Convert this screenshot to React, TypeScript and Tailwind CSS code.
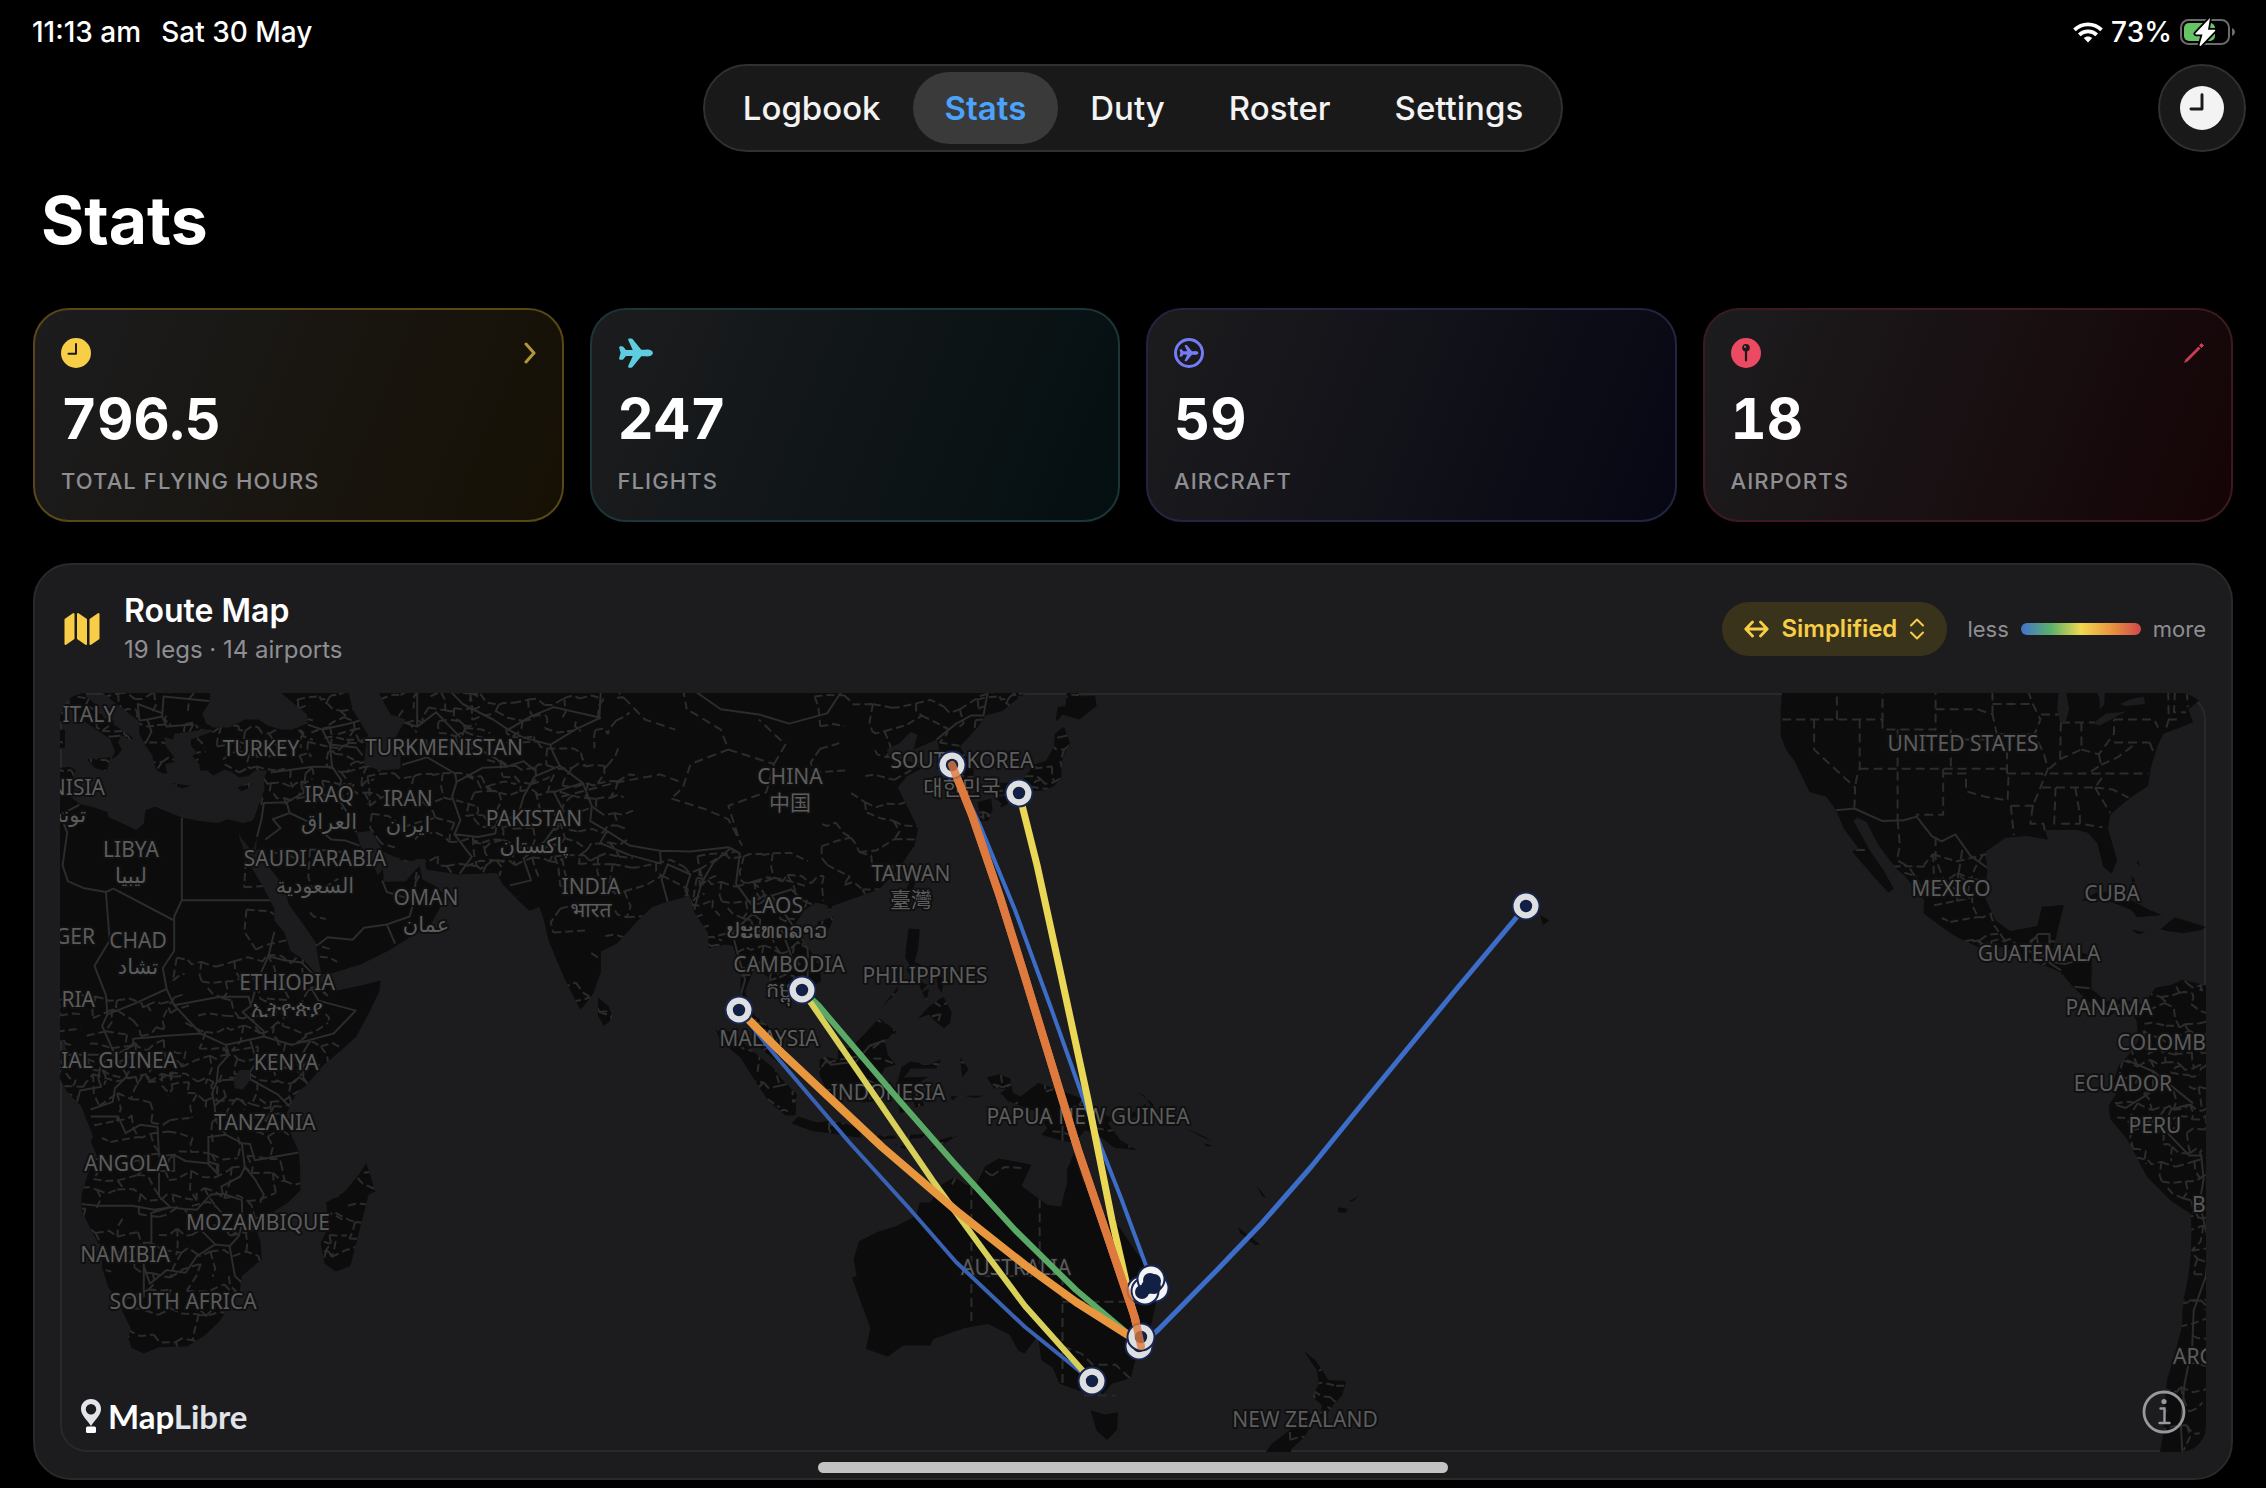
import type { ReactNode } from "react";
import { IoAirplane } from "react-icons/io5";

/* ---------- Map geometry (longitude/latitude pairs, longitudes run 0–360) ---------- */

const SCALE = 435;
const px = (lon: number) => Math.round((-8 + (lon * Math.PI * SCALE) / 180) * 10) / 10;
const py = (lat: number) =>
  Math.round((1071.5 - SCALE * Math.log(Math.tan(Math.PI / 4 + (lat * Math.PI) / 360))) * 10) / 10;

function geo(points: number[], close = false): string {
  let d = "";
  for (let i = 0; i < points.length; i += 2) {
    d += `${i ? "L" : "M"}${px(points[i])} ${py(points[i + 1])}`;
  }
  return close ? d + "Z" : d;
}

const LAND: number[][] = [
  // Europe, Africa and Asia
  [8, 46, 8.5, 44.3, 10.2, 43.9, 10.5, 42.9, 12.2, 41.8, 14.2, 40.8, 15.6, 40, 16.2, 38.8, 15.7, 38, 16.6, 38.4, 17.1, 39, 16.6, 39.7,
    17, 40.5, 18.4, 39.8, 18.5, 40.2, 17.3, 40.9, 16, 41.5, 16.1, 41.9, 14.8, 42.1, 13.6, 43.5, 12.4, 44.2, 12.3, 45.3, 13.6, 45.6,
    13.9, 44.9, 15.2, 44.2, 16.4, 43.5, 18, 42.6, 19.4, 41.8, 19.4, 40.6, 20.2, 39.4, 21.1, 38.4, 21.3, 37.6, 21.7, 36.8, 22.5, 36.5,
    23.1, 36.5, 22.8, 37.5, 24, 37.7, 24, 38.2, 22.9, 39.3, 22.7, 40.3, 23.8, 40, 24, 40.6, 26, 40.8, 27, 40.9, 28.9, 41, 29, 40.8,
    27.5, 40.4, 26.2, 40, 26.2, 39.4, 27, 38.7, 26.4, 38.3, 27.3, 37.5, 27.4, 36.8, 28.3, 36.8, 29.2, 36.3, 30.6, 36.9, 31.5, 36.7,
    32.5, 36.1, 33.7, 36.2, 34.7, 36.8, 36.2, 36.8, 35.8, 35.8, 35.9, 34.8, 35.2, 33.2, 34.5, 31.6, 34.2, 31.3, 33, 31.1, 32, 31.3,
    31, 31.5, 29.8, 31.1, 27.3, 31.3, 25, 31.7, 23.2, 32.3, 21.5, 32.9, 20.2, 32.5, 20, 31, 19, 30.3, 17.8, 30.8, 15.4, 31.7,
    15.2, 32.3, 13.2, 32.9, 11.5, 33.2, 10.2, 34.1, 10.8, 34.8, 10.6, 35.8, 11, 36.9, 10.2, 37.2, 8, 37, 5, 37, 5, 5, 8, 4.5, 9.4, 4,
    9.8, 3, 9.7, 2, 9.3, 0.5, 8.8, -0.8, 10, -2.8, 11.8, -4.6, 12.3, -6, 13.3, -8.5, 13, -9.2, 13.8, -11, 12.6, -13.4, 11.8, -16,
    11.8, -18, 13.3, -20.9, 14.5, -22.8, 14.5, -25, 15.3, -27.3, 16.6, -28.8, 17.3, -30.3, 18.3, -32, 17.9, -33, 18.4, -34.2,
    20, -34.8, 22, -34.1, 25.7, -34, 28, -32.8, 30, -31.2, 31.3, -29.4, 32.6, -28, 32.9, -26, 35.5, -24, 35.4, -22, 34.7, -20,
    36.5, -18.5, 39, -17, 40.6, -15.5, 40.6, -12.8, 40.4, -10.5, 39.3, -8, 39.3, -6.5, 38.8, -5.5, 40, -3, 41.5, -1.7, 43.5, 0.7,
    46, 2.8, 48, 4.6, 49.8, 8, 51, 10.5, 51.2, 11.9, 48.9, 11.3, 45.5, 10.6, 43.3, 11.5, 42.8, 12.6, 41, 14.6, 39.3, 15.7, 38.5, 18,
    37.2, 19.5, 37.2, 21, 35.6, 23.8, 34, 26.2, 32.6, 29.3, 32.6, 30, 32.8, 29.4, 34.3, 27.8, 34.9, 29.5, 34.8, 28, 36.5, 26,
    38.4, 23.8, 39.1, 21.5, 41, 19, 42.6, 16.8, 43, 14.5, 43.4, 12.7, 45, 12.9, 48.7, 14, 52.2, 15.7, 55.2, 17.5, 57.8, 19,
    59.8, 22.4, 58.6, 23.6, 56.7, 24.5, 56.3, 26.2, 54.5, 24.3, 51.6, 24.2, 51.5, 25.8, 50.8, 25, 50.1, 26.6, 48.5, 28.5, 48, 30,
    50, 30.2, 51.5, 27.8, 54.5, 26.6, 57, 27, 57.2, 25.7, 61.5, 25.1, 66.5, 25.3, 67.2, 24, 69, 22.3, 70.2, 22.9, 69, 22.2,
    70.8, 20.7, 72.1, 21.2, 72.7, 19.5, 73.3, 17, 74.5, 14.2, 75.8, 11.3, 77.5, 8.1, 78.2, 8.9, 79.2, 10.2, 80.2, 13, 80.2, 15.6,
    82.3, 16.6, 85, 19.4, 87, 21.2, 89, 21.8, 91.8, 22.5, 92.5, 20.5, 94.3, 18, 94.4, 16, 96.5, 16.5, 97.6, 16.3, 98.6, 13, 98.6, 10,
    98.3, 8, 100.3, 6, 101.3, 3, 103.4, 1.3, 104.2, 1.5, 103.3, 4.5, 102, 6.2, 100.5, 7.3, 99.5, 9.3, 99.2, 10.5, 100, 12.5,
    100.5, 13.4, 102, 12.5, 103.6, 10.6, 104.8, 8.7, 106.7, 10.4, 109.2, 11.8, 109, 14, 107, 16.8, 105.7, 18.9, 107, 20.8,
    108.5, 21.7, 110, 21.4, 110.3, 20.5, 110.7, 21.3, 114, 22.4, 116.8, 23.3, 119.2, 25.5, 121.5, 28.5, 122, 30.5, 120.8, 32.5,
    119.3, 35, 120.5, 36.2, 122.4, 37, 120.8, 37.8, 118.9, 37.5, 117.8, 39, 119.5, 39.6, 121, 40.8, 121.9, 40.5, 121.4, 39, 124.5, 40,
    125, 38, 126.6, 37, 126.5, 34.4, 129.2, 35.3, 129.3, 37, 127.5, 39.3, 129.8, 41.2, 130.8, 42.4, 133, 42.8, 136, 44.5, 137, 46],
  // Crimea
  [32.5, 45.4, 33.6, 44.4, 35.4, 45, 36.5, 45.4, 35, 46],
  // Sicily, Sardinia, Corsica, Crete, Cyprus, Rhodes
  [12.5, 38, 15.6, 38.2, 15.1, 36.7, 13.5, 37.1],
  [8.2, 40.9, 9.6, 41, 9.6, 39.2, 8.5, 39],
  [8.6, 42.6, 9.5, 43, 9.4, 41.6, 8.7, 41.7],
  [23.6, 35.5, 26.2, 35.2, 25, 34.9],
  [32.3, 35, 34.5, 35.7, 33.8, 34.9, 32.8, 34.6],
  // Madagascar, Sri Lanka
  [49.3, -12, 50.5, -15.6, 49.6, -16, 47.2, -24.8, 45.3, -25.5, 43.8, -24.5, 43.3, -22, 44.4, -20, 44, -17, 46.4, -15.7, 48.2, -13.6],
  [79.8, 9.7, 81.2, 8.6, 81.8, 7, 80.6, 6, 79.8, 7.4],
  // Japan
  [129.8, 33.4, 131.6, 33.8, 131.8, 32.6, 131.2, 31.3, 130.2, 31.3, 130, 32.6],
  [132.4, 33.9, 134.5, 34.3, 134.2, 33.3, 132.9, 32.8],
  [131, 34.3, 132.8, 35.5, 135.5, 35.6, 136.8, 36.9, 137, 37.4, 138.8, 37.8, 139.9, 39.3, 140, 40.6, 141.2, 41.3, 142, 39.6,
    141, 38.2, 140.8, 36, 139.8, 35.1, 138.6, 34.7, 137, 34.6, 135.8, 33.5, 135, 34.5, 132.5, 34.2],
  [140, 41.6, 140.4, 43.2, 141.4, 43.3, 141.7, 45.4, 143.5, 44.2, 145.3, 44.3, 145.5, 43.3, 143.2, 42, 141, 42.5],
  // Taiwan, Hainan
  [120.2, 23, 121.5, 25.3, 121.9, 24.8, 120.8, 22],
  [108.7, 19.3, 110.9, 20, 110.3, 18.5, 109, 18.3],
  // Philippines
  [120.4, 16, 120.7, 18.5, 122.2, 18.4, 122, 16, 121.5, 14.3, 123.9, 13.2, 123.9, 12.7, 121, 13.7, 120.3, 14.8],
  [122, 11.8, 123.2, 11.4, 122.4, 10.5], [122.5, 10.4, 123.4, 10.8, 123.1, 9.2], [124.4, 12.5, 125.4, 12.3, 125.1, 10.3, 124.6, 11],
  [120.4, 13.4, 121.5, 13.2, 121.1, 12.3], [117.2, 8.4, 119.4, 11.2, 119.2, 10.4],
  [122, 7, 123.4, 8.5, 125.3, 9.8, 126.4, 7.8, 126.2, 6.4, 125.4, 5.7, 124, 6.8, 123.4, 7.5],
  // Borneo, Sumatra, Java, Sulawesi
  [109, 1.5, 109.7, 2, 111.4, 1.5, 111.4, 2.7, 113.2, 3.2, 115, 5, 116.8, 7, 117.8, 6.3, 119.2, 5.2, 117.6, 4, 118, 2.2, 119, 0.9,
    117.6, 0.5, 116.4, -1.8, 116.3, -3.9, 114.6, -4.1, 113, -3.1, 111.7, -3.4, 110.1, -2.7, 109, -0.5],
  [95.3, 5.6, 97.5, 5.2, 100.3, 2.6, 103, 0.4, 104, -1, 106, -3, 105.8, -5.8, 104.5, -5.8, 102.2, -3.8, 100.3, -0.9, 98.6, 1.8, 96, 4],
  [105.3, -6.8, 106.2, -5.9, 108.6, -6.7, 110.8, -6.4, 112.6, -6.9, 114.4, -7.7, 114.4, -8.7, 111, -8.2, 108, -7.8],
  [115, -8.2, 116.8, -8.4, 119, -8.4, 119, -8.8, 116, -9], [119.9, -8.4, 122.9, -8.2, 122.5, -8.7, 120, -8.9],
  [118.9, -9.5, 120.6, -9.9, 120.2, -10.2], [123.5, -10.3, 125, -8.9, 127.1, -8.4, 126, -9.1],
  [119.8, 0.6, 121, 1.3, 123.5, 0.9, 125, 1.6, 124.4, 0.4, 121, 0.4, 120.1, -0.8, 123.3, -0.7, 121.6, -1.8, 122.3, -3.4, 122.8, -4.5,
    121.6, -4.7, 121, -2.7, 120.3, -3, 120.4, -5.6, 119.5, -5.4, 119.6, -3.5, 118.9, -2.8],
  [127.5, 1.8, 128.1, 1.1, 128.6, 0.3, 127.8, -0.8], [128, -3.2, 130.7, -3.2, 129.5, -3.5], [126.1, -3.2, 127.2, -3.3, 126.5, -3.8],
  // New Guinea and the islands east of it
  [131, -0.8, 132.6, -0.4, 134.1, -0.9, 134.5, -2.8, 135.5, -3.3, 137.8, -1.5, 141, -2.6, 144.5, -3.9, 145.8, -5.4, 147.7, -6.1,
    147, -6.8, 148.6, -9, 150.8, -10.3, 147.8, -10, 146, -8.6, 144, -7.7, 142.6, -9.3, 141, -9.1, 138.2, -8.3, 139, -7.5, 137.8, -5.4,
    133.8, -3.9, 132.8, -2.8, 133.7, -2.3, 132, -2.2],
  [148.4, -5.7, 150.3, -5.4, 152, -4.2, 152, -5.2, 150, -6.3], [150.9, -2.7, 153, -4.3, 152.8, -4.8, 151.8, -3.2],
  [154.7, -5.4, 155.9, -6.8, 155.3, -6.5], [157, -7.4, 159.8, -8.6, 160.8, -9.2, 159, -8.4], [159.7, -9.4, 160.8, -9.8, 159.9, -9.8],
  [164.1, -20.1, 167, -22.2, 166.4, -22.3, 164.4, -20.8], [166.6, -14.9, 167.2, -15.6, 167.8, -16.4, 167.3, -16.2],
  [177.3, -17.6, 178.6, -17.8, 178.2, -18.3, 177.3, -18.2], [178.6, -16.9, 180, -16.2, 179.3, -16.8],
  // Hawaii
  [203.9, 20.2, 205.1, 19.5, 204.3, 18.9], [203.2, 20.9, 204, 20.8, 203.6, 20.6],
  // Australia
  [142.5, -10.7, 143.7, -14.4, 145.3, -15, 146, -18.2, 148.6, -20.2, 150.8, -23.3, 153.1, -25.5, 153.5, -28.5, 152.5, -32.3,
    150.8, -34.8, 150, -37.4, 147.5, -38, 146.3, -39.1, 144.8, -38.1, 143.5, -38.8, 140.6, -38, 139.7, -36.3, 138.2, -35.5,
    137.8, -32.8, 136, -34.8, 135.2, -34.5, 134, -32.7, 131.2, -31.5, 128, -32, 124, -33.2, 123.6, -33.9, 120, -33.9, 118, -35.1,
    115.1, -34.3, 115.7, -32, 114, -28, 113.3, -26.2, 113.9, -26, 113.5, -24, 114.2, -21.8, 116.8, -20.6, 119, -20, 121.7, -18.7,
    122.2, -17, 123.6, -17, 125, -14.8, 126.8, -13.8, 128.3, -14.8, 129.6, -14.8, 130.8, -12.4, 132.6, -11.4, 136, -12, 136.9, -12.2,
    135.6, -14.9, 139, -17.3, 140.8, -17.5, 141.6, -14.5, 141.6, -12.8],
  [144.7, -40.7, 146.5, -41.1, 148.3, -40.9, 148.2, -42.6, 146.9, -43.6, 145.5, -42.7],
  // New Zealand
  [172.8, -34.5, 174.4, -35.6, 175.4, -36.8, 176, -37.6, 178.4, -37.7, 177.8, -39.2, 176.8, -40, 175.3, -41.6, 174.8, -41.3,
    175.2, -40.2, 173.9, -39.3, 174.8, -38, 174.5, -36.6],
  [172.7, -40.6, 174.2, -41.3, 173, -43.2, 171.2, -44.4, 170.6, -46, 166.5, -46, 168.5, -44, 171.2, -42.5],
  // The Americas
  [235.9, 46, 235.6, 43, 235.6, 40.4, 236.3, 39, 237.5, 37.7, 238.2, 36.5, 239.4, 34.5, 241.6, 34, 242.9, 32.5, 243.9, 30.5, 245.9, 28.1,
    245, 27.8, 247.8, 24.9, 249.8, 22.9, 250.5, 23.4, 249.2, 25.5, 247.3, 28, 245.2, 31.3, 245.6, 31.7, 246.9, 31.2, 248.5, 28.5,
    250.8, 25.8, 252, 24.9, 254.5, 22, 254.4, 20.4, 256.5, 18.9, 258.5, 17.6, 261.5, 16.2, 265.2, 16.1, 267.8, 14.5, 270.5, 13.8,
    272.4, 13, 274.2, 11, 275.5, 9.8, 277, 8.3, 279, 7.3, 280.5, 8.6, 281.8, 8.2, 282.5, 6.5, 282.7, 4, 281.3, 2, 280.1, 0.8,
    279.1, -2.3, 279.8, -3, 278.8, -4.5, 279, -6.2, 281.3, -9, 283, -12.2, 283.9, -13.8, 287, -16.8, 289.6, -18.4, 289.7, -20.5,
    289.6, -23.5, 289.3, -26, 288.6, -29, 288.4, -32, 287.3, -35.5, 286.5, -37.5, 286.2, -40, 286, -43, 285.2, -46, 295, -46, 295, 10.5,
    288.5, 12, 287, 11.3, 285, 11, 283.3, 8.8, 280.5, 9.5, 278.5, 9.2, 276.5, 10.8, 276.6, 15, 274, 15.9, 271.5, 15.8, 272, 18,
    272.9, 21.4, 270, 21.2, 269.4, 18.8, 265.8, 18.2, 263.9, 19.5, 262.4, 22.5, 262.8, 25.5, 262.6, 27.8, 265.2, 29.4, 268, 29.6,
    270.8, 29.2, 270.4, 30.3, 274.5, 30.3, 276, 30, 277.3, 28.8, 278.1, 26, 279.2, 25.2, 279.9, 26.8, 278.7, 30.5, 279, 32,
    281.5, 33.8, 284, 35.2, 284.3, 37, 285.2, 39.3, 286, 40.6, 289.9, 41.7, 289.3, 43, 291, 44, 295, 46],
  // Cuba, Jamaica, Hispaniola, Bahamas
  [275.1, 21.9, 277.5, 23.1, 280.3, 22.7, 284.2, 20.8, 285.8, 20.2, 282.5, 19.9, 281.8, 20.8, 278, 22.2],
  [281.7, 18.4, 283.7, 18, 282.6, 17.8], [285.6, 18.4, 287.5, 19.9, 291.6, 18.7, 291, 18.3, 288.6, 17.9, 286.5, 18.2],
  [281.8, 25, 282.3, 24.4, 281.9, 24], [282.7, 26.8, 283, 26, 282.5, 26.5],
];

const WATER: number[][] = [
  // Black Sea, Caspian Sea
  [28, 46, 28.8, 44.8, 28.6, 43.6, 27.7, 42.6, 28.2, 41.6, 29.1, 41.2, 31.3, 41.2, 33.3, 42, 35.1, 42, 36.3, 41.4, 38, 41, 39.5, 41,
    41.6, 41.6, 41.5, 42.5, 39, 44, 37.5, 44.9, 37, 46],
  [47, 46, 47, 44.5, 47.5, 43, 49.5, 40.5, 49.2, 39, 49, 37.5, 51, 36.8, 53.8, 37, 53.8, 39, 53, 40, 54.5, 42, 52.5, 42.5, 51, 44.5, 51, 46],
  // Lake Victoria, the Great Lakes
  [31.8, -1, 32.6, 0.2, 34, 0.2, 34, -1.2, 33, -2.4, 32, -2.2],
  [272.4, 46, 272, 43, 272.4, 41.7, 273.1, 41.7, 273.6, 43, 273.2, 44.6, 274, 46],
  [276.4, 46, 277.6, 44, 277.6, 43, 278.2, 43.4, 278.3, 44.6, 279, 46],
  [276.7, 41.6, 277.6, 41.4, 281.2, 42.8, 280.3, 42.7, 278.4, 42.6], [280.3, 43.5, 281, 43.3, 283.6, 43.5, 283.4, 44.2, 281.5, 43.9],
];

const BORDERS: number[][] = [
  [25, 31.7, 25, 22, 36.9, 22], [25, 22, 24, 20, 24, 19.5, 16, 23.4, 15, 23, 12, 23.5, 10, 24.3, 9.3, 26.2, 9.9, 30, 9, 32, 11.5, 33.1],
  [15, 23, 15.5, 17, 13.5, 13.8, 14, 12.5, 15, 10, 15.2, 7.5], [24, 19.5, 24, 15.7, 22.5, 13.5, 23, 10.8, 19, 9, 15.2, 7.5, 14.5, 6, 16.2, 2.2, 13.2, 2.2, 9.7, 2.2],
  [23, 10.8, 24, 8.7, 27.5, 5, 23, 4.7, 18.6, 4.3, 18.6, 3.4, 16.2, 2.2], [24, 8.7, 30, 9.8, 33.8, 9.8, 34.1, 8.6, 33, 7.8, 35.8, 5.3, 35.8, 4.6, 34, 4.2, 30.8, 3.5, 27.5, 5],
  [37.2, 18.1, 36.4, 15, 35, 12, 34.1, 8.6], [36.4, 15, 38.5, 14.5, 40.8, 14.2, 42.6, 12.4], [43, 11, 42, 11, 43, 9.3, 47.9, 8, 45, 5, 42, 4.2, 39.5, 3.5, 35.8, 4.6],
  [41.9, 4, 41, 2.5, 41, -0.8, 41.6, -1.7], [34, 4.2, 34.9, 1.2, 34, 0, 34, -1, 37.6, -3, 39.2, -4.6], [30.8, 3.5, 31.2, 2.2, 29.8, 0.6, 29.6, -1.4, 30.5, -1.1, 34, -1],
  [29.6, -1.4, 29, -2.8, 29.3, -4.5, 30.8, -3.3, 30.5, -2.4], [29.3, -4.5, 29.5, -6.5, 30.8, -8.3, 32.9, -9.4, 34, -9.5, 34.6, -11.6, 40.4, -10.6],
  [32.9, -9.4, 33.3, -12.5, 32.7, -13.7, 30.2, -15, 30.4, -15.9, 32.9, -16.7, 33, -19.5, 32.5, -21.2, 31.3, -22.4, 29.4, -22.2, 27, -23.6, 25.5, -25.6, 23, -25.3, 20.8, -26.9, 20, -24.8, 20, -28.4, 17, -28.6],
  [20, -24.8, 20, -22, 21, -22, 21, -18.3, 23.5, -17.6, 25.3, -17.8, 27, -17.9, 28.8, -16, 30.4, -15.9], [25.3, -17.8, 27.7, -20.6, 29.4, -22.2],
  [11.8, -17.2, 13.9, -17.4, 18.4, -17.4, 21.4, -17.9, 23.5, -17.6, 22, -16.2, 22, -13, 24, -13, 24, -10.9, 22, -11.1, 21.8, -7.3, 19.5, -7, 17.6, -8.1, 16.6, -5.9, 13, -5.9],
  [24, -10.9, 25.5, -11.7, 28.4, -12, 29.8, -13.4, 29.8, -12.2, 28.5, -11.8, 28.5, -8.6, 30.8, -8.3], [31.3, -22.4, 32, -26, 32.9, -26.8],
  [33.3, -12.5, 34.6, -14, 35.8, -16, 35.3, -17], [27, -29.6, 28.8, -28.6, 29.4, -29.6, 28.2, -30.6, 27, -29.6],
  [16.2, 2.2, 17.8, -0.6, 16.2, -2.2, 15.9, -4, 13, -5], [14.5, 2.2, 14, -1, 14.4, -2, 11.6, -2.5, 11.2, -4],
  [34.9, 29.5, 35.5, 31.5, 35.8, 33.3, 38.8, 33.4, 41, 34.4, 41.3, 36.5, 42.3, 37.2, 36.7, 36.6], [36, 29.2, 38, 30.5, 37, 31.5, 39.2, 32.2, 38.8, 33.4],
  [39.2, 32.2, 42, 31.1, 44.7, 29.2, 46.5, 29.1, 48.4, 28.5], [42.3, 37.2, 44.8, 37.2, 46, 35.8, 45.5, 34, 47.7, 31, 48, 30], [44.8, 37.2, 44.5, 39.5, 43.5, 41, 41.6, 41.5],
  [44.5, 39.5, 48, 39.2, 48.8, 38.4], [43.5, 41, 46.5, 41.5, 48.5, 41.9], [43, 16.5, 44.2, 17.4, 47.5, 17.1, 49, 18.6, 52, 19, 55, 20, 55.6, 22, 52, 23, 51.4, 24.4],
  [52, 19, 53.1, 16.6], [55.6, 22, 55.8, 24.2, 56.3, 25], [61.6, 25.2, 63.2, 27.2, 60.9, 29.8, 61.7, 31.4, 60.6, 34, 61.2, 35.6, 61, 36.5, 57.3, 38.2, 54, 37.4],
  [60.9, 29.8, 64, 29.5, 66.3, 29.9, 66.5, 31.3, 69.3, 31.9, 70, 34, 71.5, 36.2, 74.8, 37.3], [61.2, 35.6, 64.6, 37.1, 67.8, 37.2, 70, 37.8, 71.5, 36.8],
  [53, 42, 56, 41.3, 58.5, 42.7, 62, 40, 66.5, 38, 67.8, 37.2], [56, 45, 56, 41.3], [58.6, 46, 62, 43.5, 66, 42, 68, 41, 71, 42.3, 74, 43.2, 80, 42.2, 80.2, 45],
  [68, 41, 70, 40.2, 73.5, 39.5, 74, 38.5, 74.8, 37.3, 77.8, 35.5, 79, 33, 78.8, 31.3, 81, 30.2, 84, 28.5, 88, 27.9, 92, 27.8, 97, 28.3, 98.5, 27.6],
  [73.6, 39.5, 76.8, 41, 80.2, 42.2], [68.2, 23.8, 71, 24.4, 70, 27, 72.8, 29, 74.5, 31, 75.3, 32.4, 74, 34.5, 77.8, 35.5], [81, 30.2, 80.1, 28.8, 84, 27.4, 88.1, 26.4, 88, 27.9],
  [89, 21.8, 88.2, 24.5, 89, 26.3, 92, 25.1, 91.3, 23.2, 92.4, 21.2], [92.5, 20.8, 93.4, 24, 95, 26.5, 97.3, 28.2, 98.5, 27.6, 98, 24, 100, 21.5, 101.2, 21.6],
  [98.6, 10, 99.2, 12, 98.3, 15, 97.5, 18, 100.2, 20.3, 101.2, 19.6, 101, 17.6, 104, 18.3, 105, 15.8, 105.5, 14.4, 103, 14.3, 102.4, 12],
  [101.2, 21.6, 102.2, 22.4, 105.3, 23.3, 106.7, 22, 108, 21.5], [102.2, 22.4, 104.5, 20.2, 107.4, 16.2, 107.5, 14.5, 107.4, 12.3, 105.8, 11, 104.6, 10.4],
  [100.1, 6.5, 102, 6.2], [109.6, 2, 110.5, 0.9, 113.8, 1.3, 115.6, 3.4, 117.6, 4.1], [141, -2.6, 141, -9.1], [124.4, 40, 127, 41.6, 129, 42.4, 130.6, 42.4, 131.2, 44.8],
  [126.6, 37.8, 128.4, 38.6], [88, 46, 92, 45, 96, 43, 101, 42.5, 105, 41.6, 110, 42.6, 112, 44.8, 116, 46],
  [19.4, 41.9, 20.5, 42, 21, 40.8, 20.2, 39.6], [20.5, 42, 22.4, 42.3, 23, 41.3, 26.5, 41.5, 26, 40.8], [22.4, 42.3, 22.6, 44.2, 28.6, 43.8], [19.4, 41.9, 19.2, 43.5, 22.5, 42.6],
  [242.9, 32.5, 245.3, 32.7, 249, 31.3, 251.8, 31.4, 253.5, 31.8, 255.5, 29.6, 256.8, 29, 258.6, 29.8, 260.6, 27.3, 262.8, 25.9],
  [267.8, 14.6, 268, 16.1, 269.5, 17.8, 271, 17.8, 271, 15.9, 270.6, 14.4, 272.5, 13.2], [270.6, 14.4, 273, 14, 276.8, 15], [274.3, 11.1, 276.3, 10.9],
  [281.2, 1.5, 284.7, 0, 284.6, -2.6, 281, -4.8, 279.8, -4.4], [284.7, 0, 289.9, -4.2], [289.9, -4.2, 287, -5, 286, -7.5, 289.4, -11, 291, -11, 291.3, -14, 290.7, -17.5, 289.8, -18.3],
  [291, -18, 292, -22, 291.6, -26, 290, -30, 289.8, -34, 288.8, -38, 288.3, -42, 288.6, -46],
];

const STATES: number[][] = [
  [235.8, 42, 249, 42, 249, 46], [240, 42, 240, 39, 245.4, 35, 245.3, 32.8], [243, 42, 243, 46], [246, 42, 246, 37, 245.6, 36, 245.4, 35], [249, 42, 249, 41, 256, 41, 256, 46],
  [249, 45, 256, 45], [251, 41, 251, 31.4], [258, 41, 258, 37], [246, 37, 265.4, 37], [257, 37, 257, 32, 253.4, 32],
  [257, 36.5, 260, 36.5, 260, 34.6, 262.5, 34, 265.5, 33.6, 265.6, 36.5], [256, 43, 261.5, 43, 263.5, 42.5, 264.2, 40, 265.4, 39.1, 265.4, 36.5], [256, 45.9, 263.5, 45.9, 263.5, 42.5],
  [258, 40, 264.7, 40], [263.5, 43.5, 268.8, 43.5], [264.3, 40.6, 268.6, 40.5], [265.4, 36.5, 270, 36.5, 270.5, 36], [265.9, 33, 269, 33], [265.9, 33, 266.3, 29.7],
  [267.5, 46, 268.8, 43.5, 269.8, 42, 269, 40.5, 270.2, 38.7, 270.8, 37, 269.8, 35, 268.8, 33, 268.5, 31, 270.2, 31, 270.4, 30.2],
  [269.9, 42.5, 272.2, 42.5], [272.5, 41.7, 272.4, 38, 271, 37], [272.5, 41.7, 277, 41.7], [275.2, 41.7, 275.2, 39, 272.4, 38], [275.2, 39, 277.5, 38.5, 279.5, 40.6, 279.5, 42],
  [277.5, 38.5, 277.8, 37.4, 276.3, 36.6], [277.8, 37.4, 280, 38.2, 282.2, 39.5], [279.5, 39.7, 284.2, 39.7], [279.5, 42, 284.8, 42, 285.3, 41.2], [284.2, 39.7, 284.8, 38.5],
  [271, 36.5, 284, 36.5], [270, 35, 277, 35, 278.3, 36.5], [271.8, 35, 271.6, 30.4], [274.4, 35, 275, 32, 275, 31, 278, 30.6], [272.5, 31, 275, 31], [277, 35, 279, 32.2],
  [277, 35, 279.3, 34.8, 281.4, 33.9], [286.6, 46, 286.7, 42, 286.4, 41.2], [287.6, 46, 287.4, 42.7, 289, 42.7], [286.6, 42, 288.3, 42], [289, 46, 289.2, 43.2],
  [129, -14.9, 129, -31.7], [138, -16.6, 138, -26, 129, -26], [141, -26, 141, -38], [138, -26, 141, -26], [141, -29, 149, -29, 151, -28.7, 153.4, -28.2],
  [141, -34, 143.5, -34.8, 145, -36, 148, -36, 150, -37.5],
  [251, 31.4, 251.3, 28.5, 250.9, 26.8, 252.5, 26, 253.6, 24.4, 254.5, 22.6], [256, 29.5, 256, 27, 257, 24.6, 259, 23], [259.5, 28, 259, 25, 260.5, 24, 260, 22],
  [245.5, 28, 247.2, 28], [78.5, 46, 82, 45, 86, 42, 90, 41], [92, 42.8, 96, 41, 97, 39, 92, 37.5, 91, 35, 89.5, 33.8], [75, 34, 82, 35.5, 88, 36.4, 91, 35.5],
  [97, 39, 103, 37.5, 102, 34.5, 97, 33, 98.5, 29], [89.5, 33.8, 94, 32.6, 97, 31.5, 98.8, 28.5], [91, 45, 91.5, 43], [103, 37.5, 104.5, 39.5, 101, 42],
];

/* Regions with finely divided districts: left, top, right, bottom, cell size. */
const DISTRICTS: number[][] = [
  [60, 694, 190, 790, 16], [196, 730, 370, 800, 13], [300, 694, 480, 740, 14], [370, 780, 500, 870, 20], [470, 700, 620, 870, 16], [560, 860, 720, 1010, 24],
  [62, 1000, 170, 1080, 15], [170, 960, 340, 1110, 17], [60, 1080, 330, 1250, 19], [90, 1250, 290, 1360, 21], [320, 1150, 390, 1290, 17],
  [820, 700, 1000, 930, 24], [690, 880, 830, 1140, 17], [830, 1000, 1000, 1180, 21], [980, 694, 1070, 830, 14], [1000, 1060, 1180, 1150, 26], [250, 860, 330, 960, 28],
  [1290, 1340, 1370, 1451, 14], [1920, 940, 2060, 1020, 12], [1900, 860, 2010, 940, 19], [2120, 980, 2206, 1160, 14], [2130, 1160, 2206, 1300, 17], [2140, 1300, 2206, 1451, 22], [700, 860, 800, 900, 20],
];

const noise = (a: number, b: number, c: number) => {
  const v = Math.sin(a * 127.1 + b * 311.7 + c * 74.7) * 43758.5453;
  return v - Math.floor(v);
};

function districtPath([x0, y0, x1, y1, s]: number[]): string {
  const at = (i: number, j: number) => [x0 + (i + (noise(i, j, s) - 0.5) * 0.8) * s, y0 + (j + (noise(j, i, s + 3) - 0.5) * 0.8) * s];
  let d = "";
  const edge = (i: number, j: number, k: number, l: number) => {
    if (noise(i + k, j + l, 9) < 0.22) return;
    const [ax, ay] = at(i, j);
    const [bx, by] = at(k, l);
    const mx = (ax + bx) / 2 + (noise(i, l, 5) - 0.5) * s * 0.5;
    const my = (ay + by) / 2 + (noise(k, j, 6) - 0.5) * s * 0.5;
    d += `M${ax.toFixed(1)} ${ay.toFixed(1)}L${mx.toFixed(1)} ${my.toFixed(1)}L${bx.toFixed(1)} ${by.toFixed(1)}`;
  };
  for (let i = 0; i * s < x1 - x0; i++) {
    for (let j = 0; j * s < y1 - y0; j++) {
      edge(i, j, i + 1, j);
      if ((i + j) % 2 === 0) edge(i, j, i, j + 1);
    }
  }
  return d;
}

const landPath = LAND.map((p) => geo(p, true)).join("");
const waterPath = WATER.map((p) => geo(p, true)).join("");
const borderPath = BORDERS.map((p) => geo(p)).join("");
const statePath = STATES.map((p) => geo(p)).join("");
const districtsPath = DISTRICTS.map(districtPath).join("");

type Anchor = "start" | "middle" | "end";
const LABELS: [string, number, number, Anchor?][] = [
  ["ITALY", 89, 714], ["TURKEY", 261, 748], ["TURKMENISTAN", 444, 747], ["NISIA", 105, 787, "end"], ["تونس", 86, 814, "end"],
  ["IRAQ", 329, 794], ["العراق", 329, 821], ["IRAN", 408, 798], ["ایران", 408, 824], ["PAKISTAN", 534, 818], ["پاکستان", 534, 845],
  ["LIBYA", 131, 849], ["ليبيا", 131, 875], ["SAUDI ARABIA", 315, 858], ["السعودية", 315, 885], ["OMAN", 426, 897], ["عمان", 426, 924],
  ["INDIA", 591, 886], ["भारत", 591, 909], ["GER", 95, 936, "end"], ["CHAD", 138, 940], ["تشاد", 138, 966], ["ETHIOPIA", 287, 982], ["ኢትዮጵያ", 287, 1008],
  ["RIA", 95, 999, "end"], ["RIAL GUINEA", 177, 1060, "end"], ["KENYA", 286, 1062], ["TANZANIA", 265, 1122], ["ANGOLA", 127, 1163],
  ["MOZAMBIQUE", 258, 1222], ["NAMIBIA", 125, 1254], ["SOUTH AFRICA", 183, 1301], ["CHINA", 790, 776], ["中国", 790, 802],
  ["SOUTH KOREA", 962, 760], ["대한민국", 962, 787], ["TAIWAN", 911, 873], ["臺灣", 911, 899], ["LAOS", 777, 905], ["ປະເທດລາວ", 777, 930],
  ["CAMBODIA", 789, 964], ["កម្ពុជា", 789, 989], ["PHILIPPINES", 925, 975], ["MALAYSIA", 769, 1038], ["INDONESIA", 888, 1092],
  ["PAPUA NEW GUINEA", 1088, 1116], ["AUSTRALIA", 1016, 1267], ["NEW ZEALAND", 1305, 1419], ["UNITED STATES", 1963, 743], ["MEXICO", 1951, 888],
  ["CUBA", 2112, 893], ["GUATEMALA", 2039, 953], ["PANAMA", 2109, 1007], ["COLOMB", 2117, 1042, "start"], ["ECUADOR", 2123, 1083], ["PERU", 2155, 1125],
  ["B", 2192, 1204, "start"], ["ARG", 2173, 1356, "start"],
];

const SEOUL_SYDNEY = "M952 765L972 815L1000 897L1025 977L1061 1095L1078 1150L1107 1235L1135 1318L1141 1346";

const ROUTES: { color: string; width: number; d: string }[] = [
  { color: "#3c6dc9", width: 4, d: "M952 766L979 823L1015 910L1051 1008L1082 1095L1101 1147L1121 1198L1151 1279" },
  { color: "#3c6dc9", width: 5, d: "M1526 906L1454 992L1367 1098L1311 1167L1262 1223L1217 1270L1158 1330L1139 1346" },
  { color: "#3a62b4", width: 4, d: "M739 1010L775 1055L849 1142L908 1207L956 1262L1025 1327L1092 1381" },
  { color: "#5aaa66", width: 6, d: "M802 990L819 1006L898 1099L954 1163L1015 1230L1076 1290L1139 1343" },
  { color: "#d9d05a", width: 6, d: "M802 990L877 1099L933 1181L984 1251L1025 1306L1092 1381" },
  { color: "#e8973f", width: 8, d: "M739 1010L783 1054L882 1147L959 1213L1025 1265L1076 1302L1139 1342" },
  { color: "#ead756", width: 7, d: "M1019 793L1037 865L1061 975L1088 1100L1112 1220L1140 1343" },
  { color: "#df7a3e", width: 8, d: SEOUL_SYDNEY },
];

const AIRPORTS: number[][] = [[739, 1010], [802, 990], [952, 765], [1019, 793], [1526, 906], [1092, 1381], [1139, 1346], [1141, 1337]];
const COAST_CLUSTER: number[][] = [[1155, 1288], [1141, 1290], [1145, 1291], [1151, 1279]];
const COAST_CORES: number[][] = [[1150, 1280], [1154, 1281], [1142, 1292], [1148, 1287], [1154, 1287]];

function RouteMap() {
  return (
    <svg viewBox="60 693 2146 759" className="block w-full" role="img" aria-label="Flight routes on a world map">
      <defs>
        <clipPath id="land">
          <path d={landPath} />
        </clipPath>
        <clipPath id="frame">
          <rect x="60" y="693" width="2146" height="759" rx="26" />
        </clipPath>
      </defs>
      <rect x="61" y="694" width="2144" height="757" rx="26" fill="#1c1c1e" stroke="#29292b" strokeWidth="2" />
      <g clipPath="url(#frame)">
        <path d={landPath} fill="#0c0c0c" />
        <g clipPath="url(#land)" fill="none" stroke="#2c2c2c" strokeWidth="2" strokeLinejoin="round">
          <path d={districtsPath} strokeDasharray="8 4" />
          <path d={statePath} strokeDasharray="9 5" />
          <path d={borderPath} />
        </g>
        <path d={waterPath} fill="#1c1c1e" />
        <path d={geo([143.8, -39.2, 148, -39.2])} stroke="#29292b" strokeWidth="2" strokeDasharray="9 5" />
        <g
          className="font-['Noto_Sans','DejaVu_Sans','Noto_Sans_CJK_SC','Noto_Sans_CJK_KR',sans-serif] text-[21px]"
          fill="#5c5c5c"
          stroke="#101011"
          strokeWidth="4"
          strokeLinejoin="round"
          paintOrder="stroke"
        >
          {LABELS.map(([text, x, y, anchor]) => (
            <text key={text} x={x} y={y + 8} textAnchor={anchor ?? "middle"}>
              {text}
            </text>
          ))}
        </g>
        <g fill="none" strokeLinejoin="round" strokeLinecap="round">
          {ROUTES.map((r) => (
            <path key={r.d} d={r.d} stroke={r.color} strokeWidth={r.width} />
          ))}
        </g>
        {AIRPORTS.map(([x, y]) => (
          <g key={`${x}-${y}`}>
            <circle cx={x} cy={y} r="13.5" fill="#dedfe1" stroke="#17254f" strokeWidth="2" />
            <circle cx={x} cy={y} r="6.2" fill="#132045" />
          </g>
        ))}
        {COAST_CLUSTER.map(([x, y]) => (
          <circle key={`${x}-${y}`} cx={x} cy={y} r="13.5" fill="#f4f4f6" stroke="#17254f" strokeWidth="2" />
        ))}
        {COAST_CORES.map(([x, y]) => (
          <circle key={`${x}-${y}`} cx={x} cy={y} r="7" fill="#132045" />
        ))}
        <path d={SEOUL_SYDNEY} fill="none" stroke="#df7a3e" strokeOpacity="0.8" strokeWidth="8" strokeLinecap="round" strokeLinejoin="round" />
      </g>
    </svg>
  );
}

/* ---------- Icons ---------- */

function ClockIcon({ className, hands }: { className: string; hands: string }) {
  return (
    <svg viewBox="0 0 30 30" className={className} aria-hidden="true">
      <circle cx="15" cy="15" r="15" fill="currentColor" />
      <path d="M15 6v9.7H7.5" fill="none" stroke={hands} strokeWidth="2" strokeLinecap="round" strokeLinejoin="round" />
    </svg>
  );
}

function AircraftCircleIcon() {
  return (
    <span className="grid size-[30px] place-items-center rounded-full border-[3px] border-[#747bf3]">
      <IoAirplane className="size-5 text-[#747bf3]" aria-hidden="true" />
    </span>
  );
}

function AirportPinIcon() {
  return (
    <svg viewBox="0 0 30 30" className="size-[30px]" aria-hidden="true">
      <circle cx="15" cy="15" r="15" fill="#ec4a62" />
      <circle cx="15" cy="9.8" r="3.8" fill="#1d1a1b" />
      <path d="M15 12v10.5" stroke="#1d1a1b" strokeWidth="2.2" strokeLinecap="round" />
      <circle cx="14" cy="8.8" r="1.1" fill="#ec4a62" />
    </svg>
  );
}

function MapIcon() {
  return (
    <svg viewBox="0 0 36 34" className="h-[34px] w-9" aria-hidden="true">
      <g fill="#f7ce46" stroke="#f7ce46" strokeWidth="2" strokeLinejoin="round">
        <path d="M1.5 7.5L9.500 2v24.500L1.500 32z" />
        <path d="M14 2l8 5.500V32l-8-5.500z" />
        <path d="M26.500 7.500L34.500 2v24.500l-8 5.500z" />
      </g>
    </svg>
  );
}

function WifiIcon() {
  return (
    <svg viewBox="0 0 30 21" className="h-[21px] w-[30px]" aria-hidden="true">
      <g fill="none" stroke="#fff" strokeWidth="3.8">
        <path d="M1.5 7.8C9 .5 21 .5 28.500 7.800" />
        <path d="M6.300 12.800c4.900-4.700 12.500-4.700 17.400 0" />
      </g>
      <path d="M15 20.500l-4.300-4.400c2.400-2.300 6.200-2.300 8.600 0z" fill="#fff" />
    </svg>
  );
}

function BatteryIcon() {
  return (
    <svg viewBox="0 0 56 28" className="h-7 w-14" aria-hidden="true">
      <rect x="1" y="2" width="48" height="24" rx="7.5" fill="none" stroke="#6b6b6b" strokeWidth="2" />
      <path d="M52 10v8c2-.8 3-2.300 3-4s-1-3.200-3-4z" fill="#6b6b6b" />
      <rect x="4" y="5" width="31" height="18" rx="5" fill="#65c466" />
      <path
        d="M30 0L15.500 15.200c-.5.600-.2 1.300.6 1.300h6.400L19.500 27c0 1 1 1.200 1.600.6L35 13c.5-.6.200-1.300-.6-1.300H28z"
        fill="#fff"
        stroke="#000"
        strokeWidth="3.5"
        paintOrder="stroke"
      />
    </svg>
  );
}

function ArrowsIcon() {
  return (
    <svg viewBox="0 0 25 18" className="h-[18px] w-[25px]" fill="none" stroke="#f7ce46" strokeWidth="2.8" strokeLinecap="round" strokeLinejoin="round" aria-hidden="true">
      <path d="M2 9h21M8.500 2L1.800 9l6.700 7M16.500 2l6.700 7-6.700 7" />
    </svg>
  );
}

function ChevronsIcon() {
  return (
    <svg viewBox="0 0 16 22" className="h-[22px] w-4" fill="none" stroke="#f7ce46" strokeWidth="2" strokeLinecap="round" strokeLinejoin="round" aria-hidden="true">
      <path d="M2 7.500L8 1.500l6 6M2 14.500l6 6 6-6" />
    </svg>
  );
}

/* ---------- Page parts ---------- */

const TABS = ["Logbook", "Stats", "Duty", "Roster", "Settings"];

function StatCard({ icon, value, label, look, action }: { icon: ReactNode; value: string; label: string; look: string; action?: ReactNode }) {
  return (
    <article className={`rounded-[36px] border-2 px-[26px] pt-7 pb-[22px] ${look}`}>
      <div className="flex h-[30px] items-center justify-between">
        {icon}
        {action}
      </div>
      <p className="mt-4 text-[56px] leading-[70px] font-bold text-white tabular-nums">{value}</p>
      <p className="mt-2.5 text-[22px] leading-[34px] font-medium tracking-wider text-[#8e8e93] uppercase">{label}</p>
    </article>
  );
}

export default function App() {
  return (
    <div className="relative min-h-screen overflow-hidden bg-black font-['Inter',sans-serif] text-white">
      <header>
        <div className="flex h-16 items-center justify-between pr-[30px] pl-8 text-[28px] font-medium">
          <div className="flex gap-5">
            <time>11:13 am</time>
            <span>Sat 30 May</span>
          </div>
          <div className="flex items-center gap-2">
            <WifiIcon />
            <span>73%</span>
            <BatteryIcon />
          </div>
        </div>
        <div className="grid grid-cols-[1fr_auto_1fr] items-center px-5">
          <nav className="col-start-2 flex h-[88px] rounded-full border-2 border-[#303030] bg-[#191919] p-1.5">
            {TABS.map((tab) => (
              <button
                key={tab}
                type="button"
                aria-current={tab === "Stats" ? "page" : undefined}
                className={`rounded-full px-8 pt-0.5 text-[33px] ${tab === "Stats" ? "bg-[#3a3a3a] font-semibold text-[#4ba3fb]" : "font-medium text-[#f3f3f3]"}`}
              >
                {tab}
              </button>
            ))}
          </nav>
          <button type="button" aria-label="Recent activity" className="grid size-[88px] place-items-center justify-self-end rounded-full border-2 border-[#303030] bg-[#191919] text-[#f3f3f3]">
            <ClockIcon className="size-11" hands="#191919" />
          </button>
        </div>
      </header>

      <main className="px-[33px]">
        <h1 className="mt-7 px-2 text-[66px] leading-[80px] font-bold">Stats</h1>

        <section aria-label="Totals" className="mt-12 grid grid-cols-4 gap-[26px]">
          <StatCard
            icon={<ClockIcon className="size-[30px] text-[#f7ce46]" hands="#1c1b1a" />}
            value="796.5"
            label="Total flying hours"
            look="border-[#584817] bg-[linear-gradient(112deg,#1c1c1e,#161004)]"
            action={
              <button type="button" aria-label="Show flying hours">
                <svg viewBox="0 0 12 22" className="h-[22px] w-3" fill="none" stroke="#b3953a" strokeWidth="3" strokeLinecap="round" strokeLinejoin="round" aria-hidden="true">
                  <path d="M2 2l8 9-8 9" />
                </svg>
              </button>
            }
          />
          <StatCard
            icon={<IoAirplane className="size-9 text-[#5fcde0]" aria-hidden="true" />}
            value="247"
            label="Flights"
            look="border-[#1c3538] bg-[linear-gradient(112deg,#1c1c1e,#040f11)]"
          />
          <StatCard icon={<AircraftCircleIcon />} value="59" label="Aircraft" look="border-[#232540] bg-[linear-gradient(112deg,#1c1c1e,#070714)]" />
          <StatCard
            icon={<AirportPinIcon />}
            value="18"
            label="Airports"
            look="border-[#3e1a20] bg-[linear-gradient(112deg,#1c1c1e,#150406)]"
            action={
              <button type="button" aria-label="Edit airports">
                <svg viewBox="0 0 22 22" className="size-[22px]" aria-hidden="true">
                  <path d="M2.500 17.500L15.500 4.500l2 2L4.500 19.500 1 21z" fill="#c43f54" />
                  <path d="M16.500 3.500l2-2 2 2-2 2z" fill="#c43f54" stroke="#c43f54" strokeLinejoin="round" />
                </svg>
              </button>
            }
          />
        </section>

        <section aria-labelledby="route-map-title" className="mt-[41px] rounded-[38px] border-2 border-[#29292b] bg-[#1c1c1e] px-[25px] pt-[25px] pb-[26px]">
          <div className="flex items-center gap-6 pl-1">
            <MapIcon />
            <div className="flex-1">
              <h2 id="route-map-title" className="text-[32px] leading-[42px] font-semibold">
                Route Map
              </h2>
              <p className="text-[24px] leading-[36px] text-[#8e8e93]">19 legs · 14 airports</p>
            </div>
            <div className="flex items-center gap-5 text-[22px] text-[#8e8e93]">
              <label className="flex h-[54px] items-center gap-3 rounded-full bg-[#39331c] px-[22px]">
                <ArrowsIcon />
                <select aria-label="Map detail" className="appearance-none bg-transparent text-[24px] font-semibold text-[#f7ce46]">
                  <option>Simplified</option>
                </select>
                <ChevronsIcon />
              </label>
              <div className="flex items-center gap-3">
                <span>less</span>
                <span className="h-3 w-[120px] rounded-full bg-[linear-gradient(90deg,#4273ce,#5db169_25%,#efd850_50%,#e9963f_75%,#d0484a)]" />
                <span>more</span>
              </div>
            </div>
          </div>

          <div className="relative mt-[25px]">
            <RouteMap />
            <a href="#maplibre" className="absolute bottom-4 left-5 flex items-center gap-1.5 font-['Lato',sans-serif] text-[33px] leading-10 font-bold text-white">
              <svg viewBox="0 0 22 36" className="h-9 w-[22px]" aria-hidden="true">
                <path fillRule="evenodd" d="M11 1C5 1 1 5.500 1 11c0 6 5.500 10 10 17 4.500-7 10-11 10-17C21 5.500 17 1 11 1zm0 5a5 5 0 110 10.500A5 5 0 0111 6z" fill="#e3e4ea" />
                <rect x="6" y="28.500" width="10" height="6.500" rx="1.500" fill="#fff" />
              </svg>
              <span>
                Map<span className="text-[#e1e3ea]">Libre</span>
              </span>
            </a>
            <button type="button" aria-label="Map attribution" className="absolute right-5 bottom-[18px]">
              <svg viewBox="0 0 44 44" className="size-11" fill="none" stroke="#98989d" strokeWidth="2.8" strokeLinecap="round" aria-hidden="true">
                <circle cx="22" cy="22" r="20" />
                <path d="M18.500 18.500H22.500V33M17.500 33h10" strokeWidth="2.4" />
                <circle cx="22" cy="11.5" r="2.600" fill="#98989d" stroke="none" />
              </svg>
            </button>
          </div>
        </section>
      </main>
      <div className="absolute bottom-[15px] left-1/2 h-[11px] w-[630px] -translate-x-1/2 rounded-full bg-[#c3c3c3]" />
    </div>
  );
}
